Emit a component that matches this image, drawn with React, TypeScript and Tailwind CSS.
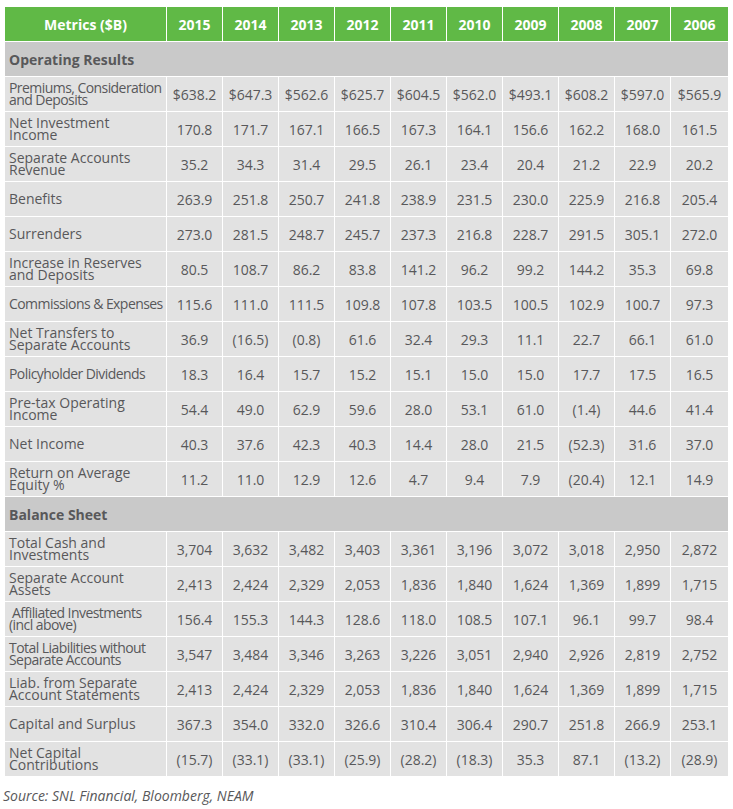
const years = ['2015', '2014', '2013', '2012', '2011', '2010', '2009', '2008', '2007', '2006'];

type Row = { label: string; values?: string[]; section?: boolean; tight?: boolean };

const rows: Row[] = [
  { label: 'Operating Results', section: true },
  { label: 'Premiums, Consideration\nand Deposits', tight: true, values: ['$638.2', '$647.3', '$562.6', '$625.7', '$604.5', '$562.0', '$493.1', '$608.2', '$597.0', '$565.9'] },
  { label: 'Net Investment\nIncome', values: ['170.8', '171.7', '167.1', '166.5', '167.3', '164.1', '156.6', '162.2', '168.0', '161.5'] },
  { label: 'Separate Accounts\nRevenue', values: ['35.2', '34.3', '31.4', '29.5', '26.1', '23.4', '20.4', '21.2', '22.9', '20.2'] },
  { label: 'Benefits', values: ['263.9', '251.8', '250.7', '241.8', '238.9', '231.5', '230.0', '225.9', '216.8', '205.4'] },
  { label: 'Surrenders', values: ['273.0', '281.5', '248.7', '245.7', '237.3', '216.8', '228.7', '291.5', '305.1', '272.0'] },
  { label: 'Increase in Reserves\nand Deposits', values: ['80.5', '108.7', '86.2', '83.8', '141.2', '96.2', '99.2', '144.2', '35.3', '69.8'] },
  { label: 'Commissions & Expenses', tight: true, values: ['115.6', '111.0', '111.5', '109.8', '107.8', '103.5', '100.5', '102.9', '100.7', '97.3'] },
  { label: 'Net Transfers to\nSeparate Accounts', values: ['36.9', '(16.5)', '(0.8)', '61.6', '32.4', '29.3', '11.1', '22.7', '66.1', '61.0'] },
  { label: 'Policyholder Dividends', tight: true, values: ['18.3', '16.4', '15.7', '15.2', '15.1', '15.0', '15.0', '17.7', '17.5', '16.5'] },
  { label: 'Pre-tax Operating\nIncome', values: ['54.4', '49.0', '62.9', '59.6', '28.0', '53.1', '61.0', '(1.4)', '44.6', '41.4'] },
  { label: 'Net Income', values: ['40.3', '37.6', '42.3', '40.3', '14.4', '28.0', '21.5', '(52.3)', '31.6', '37.0'] },
  { label: 'Return on Average\nEquity %', values: ['11.2', '11.0', '12.9', '12.6', '4.7', '9.4', '7.9', '(20.4)', '12.1', '14.9'] },
  { label: 'Balance Sheet', section: true },
  { label: 'Total Cash and\nInvestments', values: ['3,704', '3,632', '3,482', '3,403', '3,361', '3,196', '3,072', '3,018', '2,950', '2,872'] },
  { label: 'Separate Account\nAssets', values: ['2,413', '2,424', '2,329', '2,053', '1,836', '1,840', '1,624', '1,369', '1,899', '1,715'] },
  { label: ' Affiliated Investments\n(incl above)', tight: true, values: ['156.4', '155.3', '144.3', '128.6', '118.0', '108.5', '107.1', '96.1', '99.7', '98.4'] },
  { label: 'Total Liabilities without\nSeparate Accounts', tight: true, values: ['3,547', '3,484', '3,346', '3,263', '3,226', '3,051', '2,940', '2,926', '2,819', '2,752'] },
  { label: 'Liab. from Separate\nAccount Statements', values: ['2,413', '2,424', '2,329', '2,053', '1,836', '1,840', '1,624', '1,369', '1,899', '1,715'] },
  { label: 'Capital and Surplus', values: ['367.3', '354.0', '332.0', '326.6', '310.4', '306.4', '290.7', '251.8', '266.9', '253.1'] },
  { label: 'Net Capital\nContributions', values: ['(15.7)', '(33.1)', '(33.1)', '(25.9)', '(28.2)', '(18.3)', '35.3', '87.1', '(13.2)', '(28.9)'] },
];

export default function App() {
  return (
    <div className="w-[733px] h-[809px] bg-white pt-[7px] pl-[5px] text-[#58585a] font-['Open_Sans',sans-serif]">
      <div className="grid grid-cols-[161px_repeat(9,55px)_57px] gap-px w-[723px]">
        {/* header */}
        <div className="h-[34px] bg-[#60b946] flex items-center justify-center text-white font-bold text-[14px]">
          Metrics ($B)
        </div>
        {years.map((y) => (
          <div key={y} className="h-[34px] bg-[#60b946] flex items-center justify-center text-white font-bold text-[14px]">
            {y}
          </div>
        ))}

        {rows.map((r) =>
          r.section ? (
            <div key={r.label} className="col-span-11 h-[34px] bg-[#c9c9c9] flex items-center pl-[4px] font-bold text-[14px]">
              {r.label}
            </div>
          ) : (
            <Line key={r.label} row={r} />
          )
        )}
      </div>
      <p className="mt-[13px] -ml-[2px] italic text-[14px] leading-none">Source: SNL Financial, Bloomberg, NEAM</p>
    </div>
  );
}

function Line({ row }: { row: Row }) {
  return (
    <>
      <div
        className={
          row.tight
            ? 'h-[34px] bg-[#e2e2e2] flex items-center pl-[4px] text-[14px] leading-[12px] whitespace-pre tracking-[-0.04em] overflow-hidden'
            : 'h-[34px] bg-[#e2e2e2] flex items-center pl-[4px] text-[14px] leading-[12px] whitespace-pre overflow-hidden'
        }
      >
        {row.label}
      </div>
      {row.values!.map((v, i) => (
        <div key={i} className="h-[34px] bg-[#e2e2e2] flex items-center justify-center text-[14px]">
          {v}
        </div>
      ))}
    </>
  );
}
